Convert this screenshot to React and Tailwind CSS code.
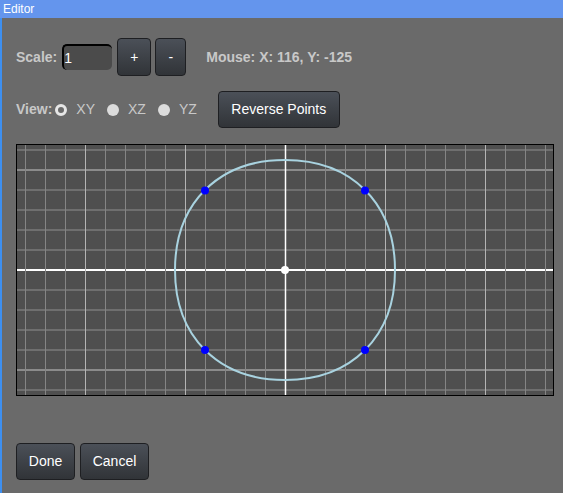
/**
 * Editor - spline point editor dialog
 */
const FONT = { fontFamily: '"Liberation Sans", Arial, sans-serif' }

const W = 536
const H = 250
const CX = 268
const CY = 125
const STEP = 20

const points = [
  { x: 188, y: 45.5 },
  { x: 348, y: 45.5 },
  { x: 188, y: 205 },
  { x: 348, y: 205 },
]

function Btn({ children, className = '' }) {
  return (
    <button
      className={`flex items-center justify-center rounded-[4px] border border-[#1e1f22] bg-gradient-to-b from-[#4b5058] to-[#313438] text-[14px] text-white ${className}`}
    >
      {children}
    </button>
  )
}

function Radio({ checked, label }) {
  return (
    <label className="flex items-center">
      {checked ? (
        <span className="box-border h-[12px] w-[12px] rounded-full border-[3px] border-[#e6e6e6] bg-[#6a6a6a]" />
      ) : (
        <span className="h-[12px] w-[12px] rounded-full bg-[#dcdcdc]" />
      )}
      <span className="ml-[9px] text-[14px] text-[#c8c8c8]">{label}</span>
    </label>
  )
}

function Grid() {
  const vLines = []
  for (let x = CX % STEP; x <= W; x += STEP) vLines.push(x)
  const hLines = []
  for (let y = CY % STEP; y <= H; y += STEP) hLines.push(y)

  const lineColor = (v, c) => {
    if (v === c) return '#ffffff'
    if (Math.abs(v - c) % 100 === 0) return '#b4b4b4'
    return '#858585'
  }

  // squarish closed curve through the four points
  const r = 110
  const k = 66.7
  const curve = `M ${CX} ${CY - r}
    C ${CX + k} ${CY - r} ${CX + r} ${CY - k} ${CX + r} ${CY}
    C ${CX + r} ${CY + k} ${CX + k} ${CY + r} ${CX} ${CY + r}
    C ${CX - k} ${CY + r} ${CX - r} ${CY + k} ${CX - r} ${CY}
    C ${CX - r} ${CY - k} ${CX - k} ${CY - r} ${CX} ${CY - r} Z`

  return (
    <svg width={W} height={H} className="block">
      <rect width={W} height={H} fill="#4f4f4f" />
      {hLines.map((y) => (
        <line key={'h' + y} x1={0} x2={W} y1={y} y2={y} stroke={lineColor(y, CY)} strokeWidth={y === CY ? 2 : 1.5} opacity={y === CY ? 1 : 0.8} />
      ))}
      {vLines.map((x) => (
        <line key={'v' + x} x1={x + 0.5} x2={x + 0.5} y1={0} y2={H} stroke={lineColor(x, CX)} strokeWidth={x === CX ? 1.5 : 1} />
      ))}
      <path d={curve} fill="none" stroke="#a9d3e0" strokeWidth={2} />
      {points.map((p, i) => (
        <circle key={i} cx={p.x} cy={p.y} r={4} fill="#0000ff" />
      ))}
      <circle cx={CX} cy={CY} r={4} fill="#ffffff" />
    </svg>
  )
}

export default function App() {
  return (
    <div className="flex h-[493px] w-[563px] flex-col overflow-hidden bg-[#6a6a6a]" style={FONT}>
      {/* Title bar */}
      <div className="h-[18px] bg-[#6495ed] pl-[3px] text-[12px] leading-[18px] text-white">Editor</div>

      <div className="flex flex-1 flex-col border-l-2 border-[#3d8ff0] pl-[14px]">
        {/* Scale row */}
        <div className="mt-[20px] flex h-[38px] items-center">
          <span className="text-[14px] font-bold text-[#c8c8c8]">Scale:</span>
          <div className="ml-[5px] flex h-[26px] w-[50px] items-center rounded-[5px] border-l-2 border-t-2 border-black bg-[#4b4b4b] text-[14px] text-white">
            1
          </div>
          <Btn className="ml-[5px] h-[38px] w-[34px]">+</Btn>
          <Btn className="ml-[4px] h-[38px] w-[31px]">-</Btn>
          <span className="ml-[20px] text-[14px] font-bold text-[#c8c8c8]">Mouse: X: 116, Y: -125</span>
        </div>

        {/* View row */}
        <div className="mt-[15px] flex h-[37px] items-center">
          <span className="mr-[3px] text-[14px] font-bold text-[#c8c8c8]">View:</span>
          <div className="flex items-center gap-[12px]">
            <Radio checked label="XY" />
            <Radio label="XZ" />
            <Radio label="YZ" />
          </div>
          <Btn className="ml-[21px] h-[37px] w-[122px]">Reverse Points</Btn>
        </div>

        {/* Canvas */}
        <div className="mt-[16px] w-fit border border-black">
          <Grid />
        </div>

        {/* Footer */}
        <div className="mt-[47px] flex gap-[5px]">
          <Btn className="h-[37px] w-[59px]">Done</Btn>
          <Btn className="h-[37px] w-[69px]">Cancel</Btn>
        </div>
      </div>
    </div>
  )
}
